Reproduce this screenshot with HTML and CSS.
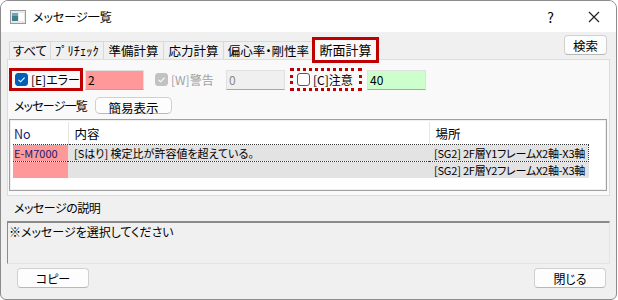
FILE: index.html
```html
<!DOCTYPE html>
<html lang="ja">
<head>
    <meta charset="UTF-8">
    <title>メッセージ一覧</title>
    <link rel="stylesheet" href="styles.css">
</head>
<body>

<div class="window">
    <div class="titlebar">
        <svg class="app-icon" width="16" height="14" viewBox="0 0 16 14">
            <rect x="0.5" y="0.5" width="15" height="13" fill="#e8e8e8" stroke="#9a9a9a"/>
            <rect x="2" y="3" width="6" height="8" fill="#3f7f8f"/>
            <rect x="2" y="3" width="6" height="3" fill="#6aa8c0"/>
            <rect x="9" y="3" width="5" height="8" fill="#ffffff"/>
        </svg>
        <span class="title">メッセージ一覧</span>
        <span class="help">?</span>
        <svg class="close" width="14" height="14" viewBox="0 0 14 14">
            <path d="M2 2 L12 12 M12 2 L2 12" stroke="#222" stroke-width="1.2"/>
        </svg>
    </div>

    <div class="body">
        <div class="tabrow">
            <div class="tabs">
                <span class="tab t1">すべて</span>
                <span class="tab t2">ﾌﾟﾘﾁｪｯｸ</span>
                <span class="tab t3">準備計算</span>
                <span class="tab t3">応力計算</span>
                <span class="tab t5">偏心率・剛性率</span>
                <span class="tab active">断面計算</span>
            </div>
            <button class="btn search">検索</button>
        </div>

        <div class="pane">
            <div class="filters">
                <label class="check mark-solid">
                    <span class="box checked"></span>[E]エラー
                </label>
                <span class="field error">2</span>
                <label class="check disabled">
                    <span class="box checked"></span>[W]警告
                </label>
                <span class="field off">0</span>
                <label class="check mark-dotted">
                    <span class="box"></span>[C]注意
                </label>
                <span class="field note">40</span>
            </div>

            <div class="listhead">
                <span class="label">メッセージ一覧</span>
                <button class="btn simple">簡易表示</button>
            </div>

            <div class="listbox">
                <table class="list">
                    <colgroup>
                        <col class="w-no">
                        <col class="w-text">
                        <col>
                    </colgroup>
                    <tr class="head">
                        <th class="c-no">No</th>
                        <th>内容</th>
                        <th class="c-place">場所</th>
                    </tr>
                    <tr class="row focus">
                        <td class="code">E-M7000</td>
                        <td>[Sはり] 検定比が許容値を超えている。</td>
                        <td class="c-place">[SG2] 2F層Y1フレームX2軸-X3軸</td>
                    </tr>
                    <tr class="row">
                        <td class="code"></td>
                        <td></td>
                        <td class="c-place">[SG2] 2F層Y2フレームX2軸-X3軸</td>
                    </tr>
                </table>
            </div>
        </div>

        <div class="desc-label">メッセージの説明</div>
        <div class="desc">※メッセージを選択してください</div>

        <div class="footer">
            <button class="btn wide">コピー</button>
            <button class="btn wide">閉じる</button>
        </div>
    </div>
</div>

</body>
</html>
```

FILE: styles.css
```css
body {
    margin: 0;
    background-color: #ffffff;
    font-family: "Noto Sans CJK JP", sans-serif;
    font-feature-settings: "palt";
    font-size: 12px;
    color: #000;
}
.window {
    width: 615px;
    height: 298px;
    border: 1px solid #8c8c8c;
    border-radius: 8px 8px 6px 6px;
    overflow: hidden;
    background-color: #f0f0f0;
    display: flex;
    flex-direction: column;
}
.titlebar {
    height: 31px;
    flex: none;
    background-color: #ffffff;
    display: flex;
    align-items: center;
    padding-left: 9px;
    padding-right: 15px;
}
.app-icon {
    margin-right: 7px;
}
.title {
    flex: 1;
    font-size: 12px;
}
.help {
    font-size: 14px;
    margin-right: 33px;
}
.body {
    flex: 1;
    display: flex;
    flex-direction: column;
    padding: 0 6px;
}
.tabrow {
    display: flex;
    align-items: flex-start;
    justify-content: space-between;
    height: 27px;
    flex: none;
}
.tabs {
    display: flex;
    align-items: flex-end;
    padding-left: 2px;
    height: 27px;
}
.tab {
    box-sizing: border-box;
    height: 18px;
    line-height: 17px;
    text-align: center;
    border: 1px solid #d9d9d9;
    border-bottom: none;
    margin-right: -1px;
    font-size: 12.5px;
    background-color: #f0f0f0;
    white-space: nowrap;
}
.t1 { width: 42px; }
.t2 { width: 54px; }
.t3 { width: 61px; }
.t5 { width: 91px; }
.tab.active {
    width: 65px;
    height: 24px;
    line-height: 22px;
    background-color: #f9f9f9;
    border-color: #f9f9f9;
    outline: 3px solid #c00000;
    outline-offset: -2px;
    position: relative;
    z-index: 1;
    margin-bottom: -3px;
    font-size: 13px;
}
.btn {
    font-family: inherit;
    font-feature-settings: "palt";
    font-size: 12px;
    background-color: #fdfdfd;
    border: 1px solid #d0d0d0;
    border-bottom-color: #b8b8b8;
    border-radius: 4px;
    padding: 0;
    color: #000;
}
.search {
    width: 43px;
    height: 20px;
    margin-top: 3px;
    margin-right: 3px;
    font-size: 12.5px;
}
.pane {
    box-sizing: border-box;
    height: 137px;
    flex: none;
    background-color: #f9f9f9;
    border: 1px solid #dcdcdc;
    padding: 8px 2px 0 1px;
}
.filters {
    display: flex;
    align-items: center;
    height: 23px;
}
.check {
    display: flex;
    align-items: center;
    box-sizing: border-box;
    height: 23px;
    padding: 0 0 0 5px;
    font-size: 12px;
    white-space: nowrap;
}
.mark-solid {
    border: 3px solid #c00000;
    width: 74px;
    padding-left: 3px;
}
.mark-dotted {
    border: 3px dotted #c00000;
    width: 72px;
    margin-left: 5px;
    padding-left: 4px;
}
.disabled {
    color: #a0a0a0;
    padding-left: 0;
    margin-left: 11px;
    width: 71px;
}
.box {
    width: 11px;
    height: 11px;
    border: 1px solid #5a5a5a;
    border-radius: 3px;
    margin-right: 3px;
    background-color: #fff;
    flex: none;
}
.box.checked {
    background-color: #005fb8;
    border-color: #005fb8;
    background-image: url("data:image/svg+xml,%3Csvg xmlns='http://www.w3.org/2000/svg' width='11' height='11'%3E%3Cpath d='M2.5 5.8 L4.6 7.8 L8.6 3.6' stroke='white' stroke-width='1.1' fill='none'/%3E%3C/svg%3E");
}
.disabled .box.checked {
    background-color: #c2c2c2;
    border-color: #c2c2c2;
}
.field {
    width: 55px;
    height: 18px;
    line-height: 18px;
    padding-left: 2px;
    border: 1px solid #e0e0e0;
    border-bottom-color: #a8a8a8;
    font-size: 12px;
}
.error {
    background-color: #ff9999;
    margin-left: 2px;
}
.off {
    background-color: #f0f0f0;
    color: #8a8a8a;
}
.note {
    background-color: #ccffcc;
    margin-left: 5px;
}
.listhead {
    display: flex;
    align-items: center;
    height: 19px;
    margin-top: 5px;
    padding-left: 5px;
}
.label {
    width: 81px;
    letter-spacing: -0.8px;
}
.simple {
    width: 77px;
    height: 17px;
    border-radius: 5px;
    font-size: 12.5px;
}
.listbox {
    margin-top: 4px;
    height: 68px;
    border: 1px solid #a0a0a0;
    outline: 1px solid #f0f0f0;
    outline-offset: -2px;
    background-color: #ffffff;
    padding: 2px 14px 0 3px;
}
.list {
    border-collapse: collapse;
    table-layout: fixed;
    width: 576px;
    font-size: 11px;
}
.w-no { width: 55px; }
.w-text { width: 361px; }
.list th {
    font-weight: normal;
    text-align: left;
    height: 22px;
    padding: 0 0 0 6px;
    border-right: 1px solid #e5e5e5;
    font-size: 12.5px;
}
.list th.c-place {
    border-right: none;
}
.list td {
    height: 16px;
    padding: 0 0 0 6px;
    background-color: #e3e3e3;
    white-space: nowrap;
    overflow: hidden;
}
.list td.c-place {
    padding-left: 5px;
    letter-spacing: -0.2px;
}
.list tr.focus td {
    border-top: 1px dotted #333;
    border-bottom: 1px dotted #333;
}
.list tr.focus td.c-place {
    border-right: 1px dotted #333;
}
.list th.c-no {
    padding-left: 1px;
    color: #1a1a70;
}
.list td.code {
    background-color: #ff9999;
    padding-left: 1px;
    color: #1a1a70;
}
.desc-label {
    height: 25px;
    line-height: 23px;
    flex: none;
    padding-left: 7px;
    letter-spacing: -0.5px;
}
.desc {
    box-sizing: border-box;
    height: 43px;
    flex: none;
    border: 1px solid #e3e3e3;
    border-top: 2px solid #8a8a8a;
    border-left: 1px solid #8a8a8a;
    padding-left: 1px;
    line-height: 18px;
}
.footer {
    display: flex;
    justify-content: space-between;
    padding: 4px 4px 0 10px;
}
.wide {
    width: 72px;
    height: 20px;
}
```
